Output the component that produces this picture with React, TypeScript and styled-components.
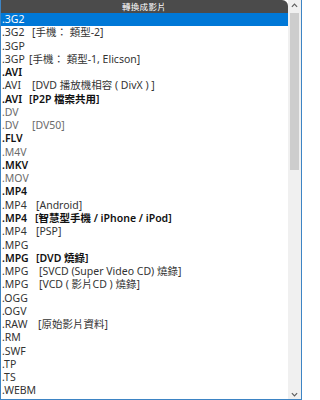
import React from 'react';
import styled, { createGlobalStyle } from 'styled-components';

interface Item {
  ext: string;
  label?: string;
  at?: number;
  tone?: 'normal' | 'light' | 'bold';
}

const items: Item[] = [
  { ext: '.3G2' },
  { ext: '.3G2', label: '[手機： 類型-2]', at: 32 },
  { ext: '.3GP' },
  { ext: '.3GP', label: '[手機： 類型-1, Elicson]', at: 29 },
  { ext: '.AVI', tone: 'bold' },
  { ext: '.AVI', label: '[DVD 播放機相容 ( DivX ) ]', at: 32 },
  { ext: '.AVI', label: '[P2P 檔案共用]', at: 29, tone: 'bold' },
  { ext: '.DV', tone: 'light' },
  { ext: '.DV', label: '[DV50]', at: 32, tone: 'light' },
  { ext: '.FLV', tone: 'bold' },
  { ext: '.M4V', tone: 'light' },
  { ext: '.MKV', tone: 'bold' },
  { ext: '.MOV', tone: 'light' },
  { ext: '.MP4', tone: 'bold' },
  { ext: '.MP4', label: '[Android]', at: 36 },
  { ext: '.MP4', label: '[智慧型手機 / iPhone / iPod]', at: 35, tone: 'bold' },
  { ext: '.MP4', label: '[PSP]', at: 36 },
  { ext: '.MPG' },
  { ext: '.MPG', label: '[DVD 燒錄]', at: 36, tone: 'bold' },
  { ext: '.MPG', label: '[SVCD (Super Video CD) 燒錄]', at: 39 },
  { ext: '.MPG', label: '[VCD ( 影片CD ) 燒錄]', at: 39 },
  { ext: '.OGG' },
  { ext: '.OGV' },
  { ext: '.RAW', label: '[原始影片資料]', at: 38 },
  { ext: '.RM' },
  { ext: '.SWF' },
  { ext: '.TP' },
  { ext: '.TS' },
  { ext: '.WEBM' },
];

const App = () => {
  return (
    <>
      <GlobalStyle />
      <Window>
        <Main>
          <Header>轉換成影片</Header>
          <List>
            {items.map((item, i) => (
              <Row key={i} $selected={i === 0} $tone={item.tone || 'normal'}>
                <Ext $w={item.at ? item.at - 2 : 0}>{item.ext}</Ext>
                {item.label && <span>{item.label}</span>}
              </Row>
            ))}
          </List>
        </Main>
        <ScrollBar>
          <Arrow viewBox="0 0 8 5">
            <path d="M1 4 L4 1 L7 4" />
          </Arrow>
          <Track>
            <Thumb />
          </Track>
          <Arrow viewBox="0 0 8 5">
            <path d="M1 1 L4 4 L7 1" />
          </Arrow>
        </ScrollBar>
      </Window>
    </>
  );
};

const GlobalStyle = createGlobalStyle`
  html, body {
    margin: 0;
    padding: 0;
    background: #ffffff;
  }
  body {
    font-family: "Noto Sans", "Noto Sans CJK TC", sans-serif;
  }
`;

const Window = styled.div`
  width: 302px;
  height: 400px;
  box-sizing: border-box;
  border: 1px solid #3d84c4;
  border-top: none;
  display: flex;
  background: #ffffff;
  overflow: hidden;
`;

const Main = styled.div`
  flex: 1;
  display: flex;
  flex-direction: column;
  min-width: 0;
`;

const Header = styled.div`
  height: 13px;
  margin-left: -1px;
  background: #4b4b4b;
  border-top-right-radius: 6px;
  color: #ffffff;
  font-family: "Noto Sans CJK TC", sans-serif;
  font-size: 8.5px;
  line-height: 13px;
  text-align: center;
  letter-spacing: 0.3px;
`;

const List = styled.div`
  display: flex;
  flex-direction: column;
`;

const Row = styled.div<{ $selected: boolean; $tone: 'normal' | 'light' | 'bold' }>`
  display: flex;
  height: 13.28px;
  line-height: 13.28px;
  padding-left: 1px;
  font-family: "Noto Sans", "Noto Sans CJK TC", sans-serif;
  font-size: 10.5px;
  white-space: nowrap;
  background: ${(p) => (p.$selected ? '#0078d7' : 'transparent')};
  color: ${(p) =>
    p.$selected ? '#ffffff' : p.$tone === 'light' ? '#6b6b6b' : p.$tone === 'bold' ? '#111111' : '#333333'};
  font-weight: ${(p) => (p.$tone === 'bold' ? 600 : 400)};
`;

const Ext = styled.span<{ $w: number }>`
  display: inline-block;
  min-width: ${(p) => p.$w}px;
`;

const ScrollBar = styled.div`
  width: 13px;
  display: flex;
  flex-direction: column;
  align-items: center;
  background: #f0f0f0;
  padding: 3px 0 2px;
  gap: 2px;
  box-sizing: border-box;
`;

const Arrow = styled.svg`
  width: 7px;
  height: 5px;
  fill: none;
  stroke: #606060;
  stroke-width: 1.4;
`;

const Track = styled.div`
  flex: 1;
  width: 100%;
  display: flex;
  justify-content: center;
  padding-top: 3px;
`;

const Thumb = styled.div`
  width: 9px;
  height: 157px;
  background: #cdcdcd;
`;

export default App;
